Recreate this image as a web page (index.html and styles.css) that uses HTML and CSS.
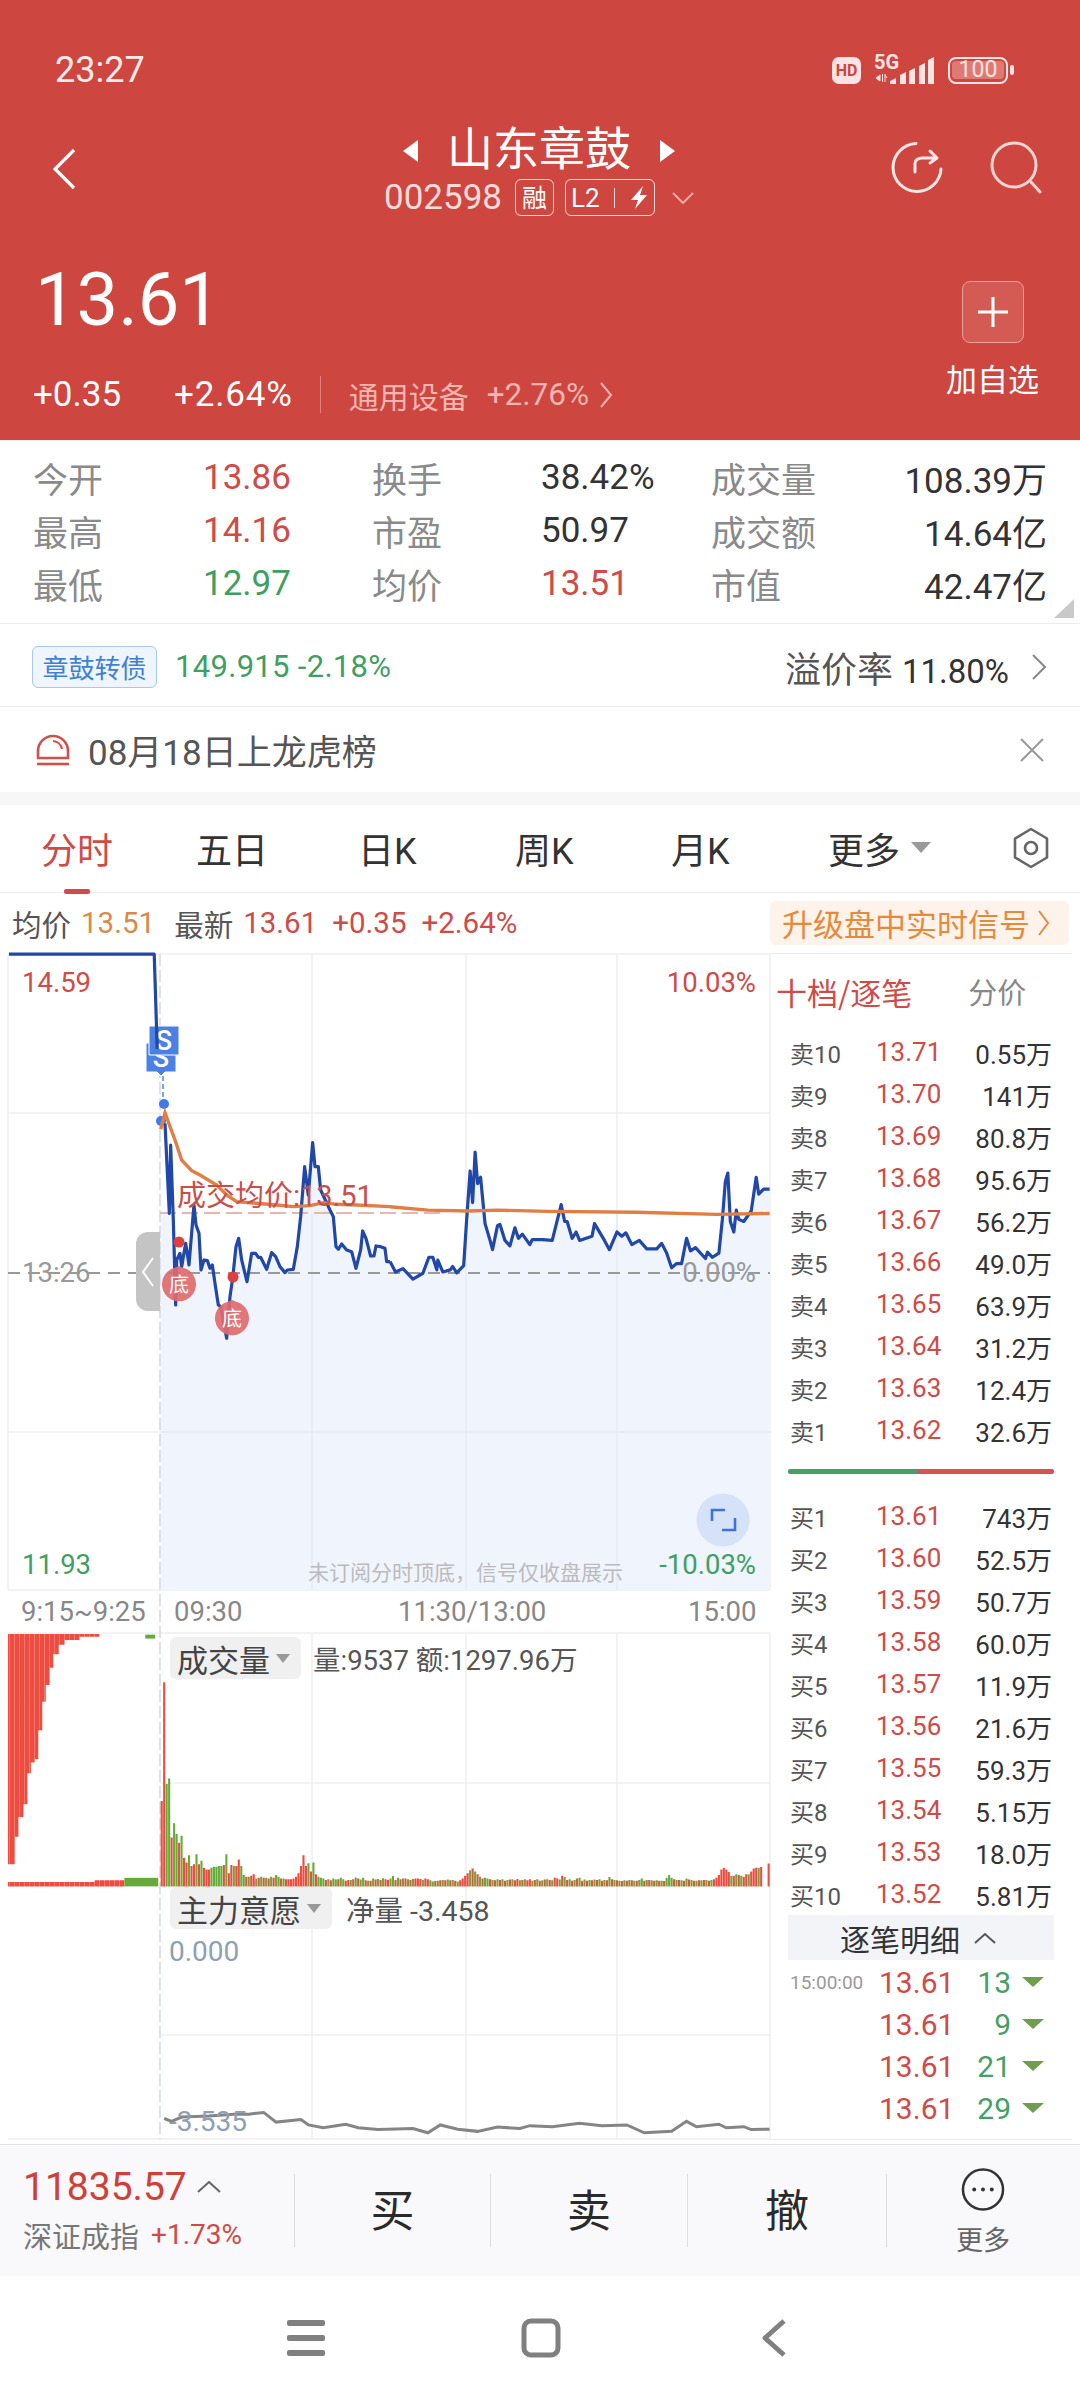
FILE: index.html
```html
<!DOCTYPE html>
<html lang="zh">
<head>
<meta charset="utf-8">
<title>山东章鼓</title>
<link rel="stylesheet" href="styles.css">
</head>
<body>
<div class="page">
<header class="hero">
  <div class="status">
    <span class="clock">23:27</span>
    <div class="status-icons">
      <span class="hd">HD</span>
      <svg class="signal" width="62" height="32" viewBox="0 0 62 32">
        <text x="0" y="15" class="five-g">5G</text>
        <path d="M2 24l4-3v6zM8.500 20v8M11 20v8M13 24l-2-3" fill="#fde3e1" stroke="#fde3e1" stroke-width="1"/>
        <g fill="#fde3e1"><path d="M16 30v-3l6-3v6z"/><path d="M26 30v-9l6-3v12z"/><path d="M35 30V17l6-3v16z"/><path d="M45 30V12l6-3v21z"/><path d="M54 30V6l6-3v27z"/></g>
      </svg>
      <div class="battery"><span class="battery-body"><span class="battery-fill">100</span></span><span class="battery-nub"></span></div>
    </div>
  </div>
  <div class="nav">
    <svg class="back" width="24" height="42" viewBox="0 0 24 42"><path d="M22 2 3 21l19 19" fill="none" stroke="#fff" stroke-width="3.200"/></svg>
    <div class="nav-center">
      <div class="title-row">
        <svg class="title-tri" width="17" height="24" viewBox="0 0 17 24"><path d="M16 1v22L1 12z" fill="#fff"/></svg>
        <h1 class="title">山东章鼓</h1>
        <svg class="title-tri" width="17" height="24" viewBox="0 0 17 24"><path d="M1 1v22l15-11z" fill="#fff"/></svg>
      </div>
      <div class="code-row">
        <span class="code">002598</span>
        <span class="tag-rong">融</span>
        <span class="tag-l2">L2<i class="tag-sep"></i><svg width="16" height="24" viewBox="0 0 16 24"><path d="M12 0 0 14h7l-3 9 12-14H9z" fill="#fff"/></svg></span>
        <svg class="code-chev" width="22" height="12" viewBox="0 0 22 12"><path d="M1 1l10 10L21 1" fill="none" stroke="#f4a9a4" stroke-width="2"/></svg>
      </div>
    </div>
    <div class="nav-icons">
      <svg width="52" height="52" viewBox="0 0 52 52"><path d="M25 2.500A24 24 0 1 0 50 28" fill="none" stroke="#fde6e4" stroke-width="3" stroke-linecap="round"/><path d="M24 31v-9c0-3 4-5 7-5h13M39 10l7 7-7 5" fill="none" stroke="#fde6e4" stroke-width="3" stroke-linecap="round" stroke-linejoin="round"/></svg>
      <svg width="52" height="54" viewBox="0 0 52 54"><circle cx="24" cy="24" r="22" fill="none" stroke="#fbd5d2" stroke-width="3"/><path d="M41 41l9 10" stroke="#fbd5d2" stroke-width="3" stroke-linecap="round"/></svg>
    </div>
  </div>
  <div class="quote">
    <div class="quote-main">
      <div class="price">13.61</div>
      <div class="changes">
        <span class="chg-a">+0.35</span><span class="chg-b">+2.64%</span>
        <span class="sector"><span class="sector-name">通用设备</span><span class="sector-pct">+2.76%</span><svg width="13" height="26" viewBox="0 0 13 26"><path d="M1 1l10 12L1 25" fill="none" stroke="#f2b5b0" stroke-width="2"/></svg></span>
      </div>
    </div>
    <div class="watch">
      <span class="watch-btn"><svg width="34" height="34" viewBox="0 0 34 34"><path d="M17 2v30M2 17h30" stroke="#fff" stroke-width="3"/></svg></span>
      <span class="watch-text">加自选</span>
    </div>
  </div>
</header>

<section class="stats">
  <span class="k">今开</span><span class="v up">13.86</span><span class="k">换手</span><span class="v">38.42%</span><span class="k">成交量</span><span class="v end">108.39万</span>
  <span class="k">最高</span><span class="v up">14.16</span><span class="k">市盈</span><span class="v">50.97</span><span class="k">成交额</span><span class="v end">14.64亿</span>
  <span class="k">最低</span><span class="v down">12.97</span><span class="k">均价</span><span class="v up">13.51</span><span class="k">市值</span><span class="v end">42.47亿</span>
  <i class="corner"></i>
</section>

<section class="bond">
  <span class="bond-tag">章鼓转债</span>
  <span class="bond-val">149.915 -2.18%</span>
  <span class="bond-prem">溢价率 <b>11.80%</b></span>
  <svg width="16" height="26" viewBox="0 0 16 26"><path d="M2 1l12 12L2 25" fill="none" stroke="#888" stroke-width="2"/></svg>
</section>

<section class="notice">
  <svg width="34" height="32" viewBox="0 0 34 32"><path d="M2 24V17a15 15 0 0 1 30 0v7z" fill="none" stroke="#d0504a" stroke-width="2.600"/><path d="M1 30h32" stroke="#d0504a" stroke-width="2.600"/><path d="M17 7a10 10 0 0 1 9 8" fill="none" stroke="#d0504a" stroke-width="2.200"/></svg>
  <span class="notice-text">08月18日上龙虎榜</span>
  <svg width="26" height="24" viewBox="0 0 26 24"><path d="M2 1l22 22M24 1 2 23" stroke="#999" stroke-width="2"/></svg>
</section>

<nav class="tabs">
  <span class="tab tab-on">分时</span>
  <span class="tab">五日</span>
  <span class="tab">日K</span>
  <span class="tab">周K</span>
  <span class="tab">月K</span>
  <span class="tab tab-more">更多<i class="tri-down"></i></span>
  <svg class="tab-gear" width="38" height="42" viewBox="0 0 38 42"><path d="M19 2l16 9.500v19L19 40 3 30.500v-19z" fill="none" stroke="#666" stroke-width="2.600" stroke-linejoin="round"/><circle cx="19" cy="21" r="6" fill="none" stroke="#666" stroke-width="2.600"/></svg>
</nav>

<section class="ticker">
  <span class="t-k">均价</span><span class="t-avg">13.51</span>
  <span class="t-k t-k2">最新</span><span class="t-v">13.61</span><span class="t-v t-gap">+0.35</span><span class="t-v t-gap">+2.64%</span>
  <span class="promo">升级盘中实时信号<svg width="12" height="26" viewBox="0 0 12 26"><path d="M1 1l9 12-9 12" fill="none" stroke="#e58a3c" stroke-width="2"/></svg></span>
</section>

<section class="board">
  <div class="canvas">
    <svg class="plot" width="780" height="1190" viewBox="0 953 780 1190">
      <defs>
        <pattern id="stripe" patternUnits="userSpaceOnUse" width="10.050" height="20">
          <rect width="10.050" height="20" fill="#ee4c40"/>
          <rect x="8.800" width="1.250" height="20" fill="#f7958c"/>
        </pattern>
      </defs>
      <!-- grid -->
      <path class="grid" d="M8 954H770M8 1113H770M8 1432H770M8 1590H770M8 954V1590M770 954V1590M312 954V1590M466 954V1590M617 954V1590M8 1633H770M160 1783H770M160 2035H770M8 2139H770M312 1633V2139M466 1633V2139M617 1633V2139M770 1633V2139"/>
      <!-- area -->
      <g transform="translate(130 1020) scale(.3333)">
        <polygon class="area" points="90,1710 90,578 118,578 122,578 130,600 137,855 140,720 150,700 155,740 167,670 177,735 192,555 198,615 207,640 213,750 222,720 232,722 240,745 247,735 255,790 265,855 272,860 290,955 300,830 308,775 318,680 326,655 335,720 351,785 365,700 377,700 385,712 392,712 410,748 425,698 437,710 450,740 465,758 472,750 490,748 502,680 512,590 524,440 535,525 548,368 555,440 565,440 572,510 600,570 610,590 618,680 625,688 635,672 650,690 665,695 678,745 692,690 698,633 708,655 722,708 732,708 738,678 752,680 765,685 770,725 780,725 780,1710"/>
      </g>
      <g transform="translate(0 950) scale(.4975 .4209)">
        <polygon class="area" points="784,1520 784,740 795,765 810,757 830,782 850,768 862,730 870,730 878,760 880,737 890,765 905,760 910,752 918,767 932,750 938,640 945,525 950,600 955,480 960,555 966,540 975,650 985,690 990,712 1000,655 1005,652 1015,690 1025,703 1035,660 1042,685 1050,675 1065,700 1070,688 1090,688 1110,690 1128,605 1135,645 1140,645 1150,685 1158,670 1165,690 1190,680 1195,650 1215,690 1225,712 1240,670 1250,680 1258,672 1270,700 1285,690 1300,710 1320,710 1330,697 1340,720 1350,755 1360,745 1370,745 1380,685 1388,715 1398,707 1418,733 1422,718 1432,730 1445,720 1452,640 1458,550 1463,530 1468,645 1475,670 1480,618 1485,640 1495,645 1510,620 1520,540 1525,580 1535,568 1547,568 1547,1520"/>
      </g>
      <path class="grid-soft" d="M312 1213V1590M466 1213V1590M617 1213V1590M160 1432H770"/>
      <path class="vdash" d="M160 954V2139"/>
      <path class="mid-dash" d="M8 1273H770"/>
      <path class="avg-dash" d="M160 1213H445"/>
      <!-- flags -->
      <path class="flag" d="M146 1043h30v29h-11l-4 4-4-4h-11z"/>
      <text class="flag-s" x="161" y="1067" text-anchor="middle">S</text>
      <path class="flag" d="M149 1026h30v29h-30z"/>
      <text class="flag-s" x="164" y="1050" text-anchor="middle">S</text>
      <path class="flag-dash" d="M163 1076V1104"/>
      <circle class="dot-blue" cx="161" cy="1121" r="5"/>
      <circle class="dot-blue" cx="164" cy="1104" r="5"/>
      <!-- price -->
      <g transform="translate(0 950) scale(.4975 .4209)">
        <polyline class="price-line" points="18,10 310,10 316,235"/>
      </g>
      <g transform="translate(130 1020) scale(.3333)">
        <polyline class="price-line" points="105,310 118,580 122,375 130,600 137,855 140,720 150,700 155,740 167,670 177,735 192,555 198,615 207,640 213,750 222,720 232,722 240,745 247,735 255,790 265,855 272,860 290,955 300,830 308,775 318,680 326,655 335,720 351,785 365,700 377,700 385,712 392,712 410,748 425,698 437,710 450,740 465,758 472,750 490,748 502,680 512,590 524,440 535,525 548,368 555,440 565,440 572,510 600,570 610,590 618,680 625,688 635,672 650,690 665,695 678,745 692,690 698,633 708,655 722,708 732,708 738,678 752,680 765,685 770,725 780,725"/>
      </g>
      <g transform="translate(0 950) scale(.4975 .4209)">
        <polyline class="price-line" points="784,740 795,765 810,757 830,782 850,768 862,730 870,730 878,760 880,737 890,765 905,760 910,752 918,767 932,750 938,640 945,525 950,600 955,480 960,555 966,540 975,650 985,690 990,712 1000,655 1005,652 1015,690 1025,703 1035,660 1042,685 1050,675 1065,700 1070,688 1090,688 1110,690 1128,605 1135,645 1140,645 1150,685 1158,670 1165,690 1190,680 1195,650 1215,690 1225,712 1240,670 1250,680 1258,672 1270,700 1285,690 1300,710 1320,710 1330,697 1340,720 1350,755 1360,745 1370,745 1380,685 1388,715 1398,707 1418,733 1422,718 1432,730 1445,720 1452,640 1458,550 1463,530 1468,645 1475,670 1480,618 1485,640 1495,645 1510,620 1520,540 1525,580 1535,568 1547,568"/>
      </g>
      <!-- average -->
      <g transform="translate(130 1020) scale(.3333)">
        <polyline class="avg-line" points="92,328 105,278 120,320 135,360 155,420 185,452 210,465 260,495 290,525 320,545 380,550 440,555 490,560 540,557 580,548 620,553 680,555 780,560"/>
      </g>
      <g transform="translate(0 950) scale(.4975 .4209)">
        <polyline class="avg-line" points="784,610 860,618 940,620 1000,618 1100,621 1280,623 1440,628 1547,626"/>
      </g>
      <!-- bottom markers -->
      <path class="di" d="M179 1266l5 2a17 17 0 1 1-10 0z"/>
      <path class="di" d="M232 1300l5 2a17 17 0 1 1-10 0z"/>
      <circle class="dot-red" cx="179" cy="1242" r="5.500"/>
      <circle class="dot-red" cx="233" cy="1277" r="5.500"/>
      <!-- expand -->
      <ellipse class="expand" cx="723" cy="1520" rx="26.500" ry="26.500"/>
      <path class="expand-mark" d="M712 1521v-11h13M735 1518v12h-13"/>
      <!-- pre-market volume -->
      <g transform="translate(0 1600) scale(.4975 .3571)">
        <path fill="url(#stripe)" d="M16 95H200V103H160V112H130V125H118V152H107V190H100V238H92V285H85V365H77V445H70V455H62V485H55V572H47V608H37V663H30V740H16Z"/>
        <rect class="bar-green-f" x="292" y="97" width="20" height="11"/>
        <path fill="url(#stripe)" d="M16 790H190V785H250V802H16Z"/>
        <rect class="bar-green-f" x="250" y="778" width="68" height="24"/>
        <path class="bar-r" d="M325 802V563M330 802V230M345 802V665M360 802V680M370 802V722M375 802V735M385 802V745M390 802V740M400 802V740M410 802V750M415 802V755M420 802V755M450 802V742M460 802V765M465 802V742M475 802V745M480 802V727M495 802V775M505 802V772M510 802V768M520 802V778M530 802V778M540 802V780M550 802V778M565 802V780M575 802V782M580 802V782M585 802V782M590 802V780M595 802V775M600 802V765M605 802V745M610 802V715M615 802V745M625 802V760M635 802V768M655 802V784M665 802V785M680 802V782M695 802V786M700 802V784M710 802V782M720 802V780M735 802V785M745 802V786M755 802V783M765 802V784M775 802V782M780 802V784M795 802V784M805 802V782M815 802V780M825 802V784M835 802V780M840 802V780M845 802V781M855 802V780M860 802V782M875 802V787M885 802V785M895 802V785M905 802V785M915 802V786M925 802V785M930 802V780M935 802V772M940 802V765M950 802V752M960 802V768M970 802V780M985 802V782M995 802V785M1005 802V784M1015 802V786M1025 802V783M1035 802V785M1040 802V781M1050 802V784M1060 802V785M1065 802V782M1075 802V784M1085 802V786M1095 802V783M1105 802V784M1115 802V778M1120 802V780M1130 802V772M1140 802V784M1150 802V786M1160 802V780M1170 802V786M1180 802V786M1190 802V785M1200 802V784M1210 802V786M1220 802V785M1230 802V782M1240 802V785M1250 802V787M1260 802V786M1270 802V785M1280 802V786M1295 802V786M1305 802V784M1315 802V786M1325 802V786M1335 802V787M1355 802V782M1365 802V784M1375 802V786M1385 802V783M1395 802V786M1405 802V785M1415 802V784M1425 802V786M1435 802V782M1440 802V778M1445 802V770M1450 802V755M1455 802V750M1460 802V755M1465 802V762M1475 802V772M1485 802V770M1495 802V775M1500 802V768M1510 802V760M1515 802V752M1520 802V750M1530 802V748M1545 802V738"/>
        <path class="bar-g" d="M335 802V515M340 802V500M350 802V625M355 802V655M365 802V660M380 802V715M395 802V712M405 802V730M425 802V750M430 802V747M435 802V747M440 802V745M445 802V745M455 802V712M470 802V745M485 802V745M490 802V770M500 802V775M515 802V780M525 802V775M535 802V778M545 802V775M555 802V770M560 802V775M570 802V780M620 802V737M630 802V735M640 802V775M645 802V778M650 802V780M660 802V782M670 802V780M675 802V783M685 802V778M690 802V782M705 802V784M715 802V777M725 802V783M730 802V778M740 802V786M750 802V780M760 802V781M770 802V779M785 802V780M790 802V773M800 802V778M810 802V780M820 802V782M830 802V781M850 802V784M865 802V785M870 802V788M880 802V786M890 802V784M900 802V783M910 802V784M920 802V788M945 802V757M955 802V760M965 802V775M975 802V778M980 802V780M990 802V784M1000 802V782M1010 802V782M1020 802V784M1030 802V782M1045 802V785M1055 802V782M1070 802V786M1080 802V782M1090 802V785M1100 802V782M1110 802V785M1125 802V783M1135 802V776M1145 802V782M1155 802V784M1165 802V778M1175 802V783M1185 802V784M1195 802V783M1205 802V782M1215 802V784M1225 802V776M1235 802V784M1245 802V786M1255 802V785M1265 802V784M1275 802V786M1285 802V784M1290 802V780M1300 802V784M1310 802V785M1320 802V785M1330 802V786M1340 802V778M1345 802V770M1350 802V778M1360 802V784M1370 802V785M1380 802V780M1390 802V784M1400 802V786M1410 802V785M1420 802V784M1430 802V784M1470 802V772M1480 802V768M1490 802V772M1505 802V768M1525 802V750"/>
        <polyline class="will-line" points="330,1452 345,1460 365,1448 420,1445 470,1440 500,1440 530,1435 555,1462 605,1455 620,1470 650,1478 695,1468 720,1478 760,1483 830,1480 860,1492 885,1470 920,1482 960,1488 1000,1476 1045,1480 1065,1472 1110,1475 1165,1465 1210,1472 1260,1470 1295,1492 1350,1488 1380,1460 1400,1475 1445,1468 1460,1478 1495,1475 1510,1483 1547,1482"/>
      </g>
    </svg>

    <span class="lab lab-hi-l up">14.59</span>
    <span class="lab lab-hi-r up">10.03%</span>
    <span class="lab lab-mid-l gray">13:26</span>
    <span class="lab lab-mid-r gray">0.00%</span>
    <span class="lab lab-lo-l down">11.93</span>
    <span class="lab lab-lo-r down">-10.03%</span>
    <span class="hint">未订阅分时顶底，信号仅收盘展示</span>
    <span class="avg-label">成交均价:13.51</span>
    <span class="di-t di-a">底</span>
    <span class="di-t di-b">底</span>
    <span class="handle"><svg width="14" height="30" viewBox="0 0 14 30"><path d="M12 1 2 15l10 14" fill="none" stroke="#fff" stroke-width="2"/></svg></span>

    <span class="axis ax-a">9:15~9:25</span>
    <span class="axis ax-b">09:30</span>
    <span class="axis ax-c">11:30/13:00</span>
    <span class="axis ax-d">15:00</span>

    <div class="chip-row chip-vol"><span class="chip">成交量<i class="tri-down tri-sm"></i></span><span class="chip-val">量:9537 额:1297.96万</span></div>
    <div class="chip-row chip-will"><span class="chip">主力意愿<i class="tri-down tri-sm"></i></span><span class="chip-val chip-val-b">净量 -3.458</span></div>
    <span class="will will-top">0.000</span>
    <span class="will will-low">-3.535</span>
  </div>

  <aside class="book">
    <div class="book-head"><span class="book-on">十档/逐笔</span><span class="book-off">分价</span></div>
    <div class="levels">
      <div class="lv"><span class="lv-k">卖10</span><span class="lv-p">13.71</span><span class="lv-q">0.55万</span></div>
      <div class="lv"><span class="lv-k">卖9</span><span class="lv-p">13.70</span><span class="lv-q">141万</span></div>
      <div class="lv"><span class="lv-k">卖8</span><span class="lv-p">13.69</span><span class="lv-q">80.8万</span></div>
      <div class="lv"><span class="lv-k">卖7</span><span class="lv-p">13.68</span><span class="lv-q">95.6万</span></div>
      <div class="lv"><span class="lv-k">卖6</span><span class="lv-p">13.67</span><span class="lv-q">56.2万</span></div>
      <div class="lv"><span class="lv-k">卖5</span><span class="lv-p">13.66</span><span class="lv-q">49.0万</span></div>
      <div class="lv"><span class="lv-k">卖4</span><span class="lv-p">13.65</span><span class="lv-q">63.9万</span></div>
      <div class="lv"><span class="lv-k">卖3</span><span class="lv-p">13.64</span><span class="lv-q">31.2万</span></div>
      <div class="lv"><span class="lv-k">卖2</span><span class="lv-p">13.63</span><span class="lv-q">12.4万</span></div>
      <div class="lv"><span class="lv-k">卖1</span><span class="lv-p">13.62</span><span class="lv-q">32.6万</span></div>
    </div>
    <div class="split"><i class="split-g"></i><i class="split-r"></i></div>
    <div class="levels">
      <div class="lv"><span class="lv-k">买1</span><span class="lv-p">13.61</span><span class="lv-q">743万</span></div>
      <div class="lv"><span class="lv-k">买2</span><span class="lv-p">13.60</span><span class="lv-q">52.5万</span></div>
      <div class="lv"><span class="lv-k">买3</span><span class="lv-p">13.59</span><span class="lv-q">50.7万</span></div>
      <div class="lv"><span class="lv-k">买4</span><span class="lv-p">13.58</span><span class="lv-q">60.0万</span></div>
      <div class="lv"><span class="lv-k">买5</span><span class="lv-p">13.57</span><span class="lv-q">11.9万</span></div>
      <div class="lv"><span class="lv-k">买6</span><span class="lv-p">13.56</span><span class="lv-q">21.6万</span></div>
      <div class="lv"><span class="lv-k">买7</span><span class="lv-p">13.55</span><span class="lv-q">59.3万</span></div>
      <div class="lv"><span class="lv-k">买8</span><span class="lv-p">13.54</span><span class="lv-q">5.15万</span></div>
      <div class="lv"><span class="lv-k">买9</span><span class="lv-p">13.53</span><span class="lv-q">18.0万</span></div>
      <div class="lv"><span class="lv-k">买10</span><span class="lv-p">13.52</span><span class="lv-q">5.81万</span></div>
    </div>
    <div class="detail-bar">逐笔明细<svg width="22" height="12" viewBox="0 0 22 12"><path d="M1 11 11 2l10 9" fill="none" stroke="#555" stroke-width="2"/></svg></div>
    <div class="trades">
      <div class="tr"><span class="tr-t">15:00:00</span><span class="tr-p">13.61</span><span class="tr-q">13</span><i class="tri-g"></i></div>
      <div class="tr"><span class="tr-t"></span><span class="tr-p">13.61</span><span class="tr-q">9</span><i class="tri-g"></i></div>
      <div class="tr"><span class="tr-t"></span><span class="tr-p">13.61</span><span class="tr-q">21</span><i class="tri-g"></i></div>
      <div class="tr"><span class="tr-t"></span><span class="tr-p">13.61</span><span class="tr-q">29</span><i class="tri-g"></i></div>
      <div class="tr"><span class="tr-t"></span><span class="tr-p">13.61</span><span class="tr-q">17</span><i class="tri-g"></i></div>
    </div>
  </aside>
</section>

<footer class="dock">
  <div class="index">
    <div class="index-top"><span class="index-val">11835.57</span><svg width="24" height="12" viewBox="0 0 24 12"><path d="M1 11 12 1l11 10" fill="none" stroke="#666" stroke-width="2"/></svg></div>
    <div class="index-sub"><span class="index-name">深证成指</span><span class="index-pct">+1.73%</span></div>
  </div>
  <span class="act">买</span>
  <span class="act">卖</span>
  <span class="act">撤</span>
  <div class="act act-more">
    <svg width="44" height="44" viewBox="0 0 44 44"><circle cx="22" cy="22" r="20.500" fill="none" stroke="#333" stroke-width="2.600"/><g fill="#333"><circle cx="13" cy="22" r="2"/><circle cx="22" cy="22" r="2"/><circle cx="31" cy="22" r="2"/></g></svg>
    <span class="act-more-t">更多</span>
  </div>
</footer>

<div class="sysnav">
  <svg width="38" height="36" viewBox="0 0 38 36"><g fill="#808080"><rect width="38" height="6" rx="2"/><rect y="15" width="38" height="6" rx="2"/><rect y="30" width="38" height="6" rx="2"/></g></svg>
  <svg width="40" height="40" viewBox="0 0 40 40"><rect x="3" y="3" width="34" height="34" rx="7" fill="none" stroke="#808080" stroke-width="5"/></svg>
  <svg width="26" height="38" viewBox="0 0 26 38"><path d="M23 2 4 19l19 17" fill="none" stroke="#808080" stroke-width="5" stroke-linejoin="round"/></svg>
</div>
</div>
</body>
</html>
```

FILE: styles.css
```css
* { box-sizing: border-box; }
html, body { margin: 0; padding: 0; background: #fff; }
body { font-family: Roboto, "Noto Sans CJK SC", sans-serif; color: #333; }
i { font-style: normal; display: block; }
.page { width: 1080px; height: 2400px; overflow: hidden; position: relative; }
.up { color: #cf4b47; }
.down { color: #3f9f63; }
.gray { color: #999; }

/* hero */
.hero { height: 440px; background: #cd463f; color: #fff; padding-top: 46px; display: flex; flex-direction: column; }
.status { height: 48px; padding: 0 66px 0 55px; display: flex; align-items: center; justify-content: space-between; }
.clock { font-size: 36px; line-height: 48px; color: #fdeceb; }
.status-icons { display: flex; align-items: center; }
.hd { width: 29px; height: 27px; border-radius: 7px; background: #fde3e1; color: #cd463f; font-size: 16px; font-weight: 700; line-height: 27px; text-align: center; margin-right: 13px; }
.signal { margin-right: 12px; overflow: visible; }
.five-g { font: 700 20px Roboto, sans-serif; fill: #fde3e1; }
.battery { display: flex; align-items: center; }
.battery-body { width: 60px; height: 27px; border: 2.500px solid #fde3e1; border-radius: 8px; padding: 2px; display: block; }
.battery-fill { display: block; height: 18px; border-radius: 4px; background: #de7a74; font-size: 23px; line-height: 18px; text-align: center; color: #fde3e1; }
.battery-nub { width: 4px; height: 10px; background: #fde3e1; border-radius: 2px; margin-left: 2px; }

.nav { margin-top: 29px; height: 93px; padding: 0 38px 0 36px; display: grid; grid-template-columns: 1fr auto 1fr; }
.back { margin: 25px 0 0 16px; }
.nav-center { display: flex; flex-direction: column; align-items: center; }
.title-row { display: flex; align-items: center; gap: 28px; height: 50px; }
.title-tri { margin-top: 6px; }
.title { margin: -3px 0 0; align-self: flex-start; font-size: 46px; line-height: 50px; font-weight: 400; font-family: "Noto Sans CJK SC", sans-serif; }
.code-row { display: flex; align-items: center; margin-top: 6px; height: 37px; }
.code { font-size: 35px; color: #fbdcd9; line-height: 37px; }
.tag-rong { width: 39px; height: 37px; border: 1.500px solid #fbdcd9; border-radius: 6px; margin-left: 13px; font-family: "Noto Sans CJK SC", sans-serif; font-size: 25px; line-height: 33px; text-align: center; }
.tag-l2 { width: 90px; height: 37px; border: 1.500px solid #fbdcd9; border-radius: 6px; margin-left: 11px; display: flex; align-items: center; padding-left: 5px; font-size: 26px; }
.tag-sep { width: 1px; height: 20px; background: #fbdcd9; margin: 0 16px 0 14px; }
.code-chev { margin-left: 17px; }
.nav-icons { display: flex; justify-content: flex-end; gap: 47px; padding-top: 18px; }

.quote { margin-top: 54px; padding: 0 41px 0 33px; display: flex; justify-content: space-between; }
.quote-main { display: flex; flex-direction: column; }
.price { font-size: 74px; line-height: 60px; padding-left: 2px; }
.changes { margin-top: 46px; height: 37px; display: flex; align-items: center; font-size: 35px; }
.chg-b { margin-left: 53px; letter-spacing: .8px; }
.sector { margin-left: 27px; padding-left: 28px; border-left: 1px solid #e0837e; display: flex; align-items: center; height: 37px; color: #f2b5b0; font-size: 31.500px; letter-spacing: 0; }
.sector-name { font-family: "Noto Sans CJK SC", sans-serif; font-size: 30px; }
.sector-pct { margin: 0 11px 0 18px; }
.watch { display: flex; flex-direction: column; align-items: center; margin-top: 11px; }
.watch-btn { width: 62px; height: 62px; border: 1.500px solid #eb9f9a; border-radius: 8px; background: #d45a54; display: flex; align-items: center; justify-content: center; }
.watch-text { margin-top: 17px; font-size: 31px; line-height: 36px; font-family: "Noto Sans CJK SC", sans-serif; }

/* stats */
.stats { position: relative; height: 184px; padding: 10px 0 0 33px; display: grid; grid-template-columns: 170px 169px 169px 170px 110px 226px; grid-auto-rows: 53px; align-items: center; font-size: 35px; width: 1080px; border-top: 1px solid #fdf0ef; border-bottom: 1px solid #ececec; }
.stats .k { font-size: 35px; color: #8a8a8a; }
.stats .v.end { text-align: right; grid-column: 6; width: 226px; }
.stats .v { color: #333; }
.stats .v.up { color: #cf4b47; }
.stats .v.down { color: #3f9f63; }
.corner { position: absolute; right: 6px; bottom: 5px; width: 0; height: 0; border-left: 20px solid transparent; border-bottom: 19px solid #c9c9c9; }

.bond { height: 83px; padding: 3px 33px 0 32px; display: flex; align-items: center; border-bottom: 1px solid #ececec; }
.bond-tag { width: 125px; height: 42px; border: 1px solid #a9c8ef; border-radius: 6px; background: #eef5fd; color: #3f7fd6; font-family: "Noto Sans CJK SC", sans-serif; font-size: 26px; line-height: 40px; text-align: center; }
.bond-val { margin-left: 18px; color: #3f9f63; font-size: 31px; letter-spacing: .3px; flex: 1; }
.bond-prem { font-size: 36px; color: #555; margin-right: 22px; }
.bond-prem b { font-weight: 400; font-size: 33px; color: #333; }

.notice { height: 85px; padding: 0 35px 0 36px; display: flex; align-items: center; }
.notice-text { margin-left: 18px; font-size: 35px; color: #555; flex: 1; }

.tabs { height: 101px; border-top: 13px solid #f7f7f7; border-bottom: 1px solid #ececec; position: relative; font-size: 36px; display: grid; grid-template-columns: 155px 162px 157px 156px 157px 184px 1fr; align-items: center; padding: 0 0 2px 41px; }
.tab { color: #333; }
.tab-on { color: #cf4b47; position: relative; }
.tab-on::after { content: ""; position: absolute; left: 23px; bottom: -20px; width: 26px; height: 5px; border-radius: 2px; background: #cf4b47; }
.tab-more { display: flex; align-items: center; gap: 11px; }
.tri-down { width: 0; height: 0; border-left: 10px solid transparent; border-right: 10px solid transparent; border-top: 11px solid #999; }
.tab-gear { justify-self: start; }

.ticker { height: 60px; padding: 0 11px 0 12px; display: flex; align-items: center; font-size: 29.500px; }
.t-k { color: #555; }
.t-avg { color: #d98a4a; margin-left: 10px; }
.t-k2 { margin-left: 19px; }
.t-v { color: #cf4b47; margin-left: 10px; }
.t-gap { margin-left: 15px; }
.promo { margin-left: auto; width: 299px; height: 44px; border-radius: 6px; background: #fdf3ea; color: #e58a3c; font-family: "Noto Sans CJK SC", sans-serif; font-size: 31px; line-height: 44px; display: flex; align-items: center; padding-left: 12px; gap: 8px; }

/* board */
.board { height: 1191px; display: grid; grid-template-columns: 770px 310px; }
.canvas { position: relative; }
.plot { position: absolute; left: 0; top: 0; overflow: visible; }
.grid { fill: none; stroke: #efefef; stroke-width: 1.500; }
.grid-soft { fill: none; stroke: #e6eaf3; stroke-width: 1.500; }
.area { fill: #eff4fd; }
.vdash { stroke: #dfe1e8; stroke-width: 2; stroke-dasharray: 12 4; fill: none; }
.mid-dash { stroke: #999; stroke-width: 2; stroke-dasharray: 12 8; fill: none; }
.avg-dash { stroke: #eab4b1; stroke-width: 2; stroke-dasharray: 16 6; fill: none; }
.flag { fill: #4c80e4; stroke: #fff; stroke-width: 1; }
.flag-s { font: 500 27px Roboto, sans-serif; fill: #fff; }
.flag-dash { stroke: #7aa3ea; stroke-width: 2; stroke-dasharray: 5 3; }
.dot-blue { fill: #3f7be6; }
.dot-red { fill: #de3f3f; }
.di { fill: #df6a6e; opacity: .92; }
.price-line { fill: none; stroke: #2148a8; stroke-width: 3.200; vector-effect: non-scaling-stroke; stroke-linejoin: round; }
.avg-line { fill: none; stroke: #e07f45; stroke-width: 3.400; vector-effect: non-scaling-stroke; }
.expand { fill: #d6e2f8; }
.expand-mark { fill: none; stroke: #3f73dc; stroke-width: 2.600; }
.bar-green-f { fill: #66ab3a; }
.bar-r { fill: none; stroke: #ee4c40; stroke-width: 2.100; vector-effect: non-scaling-stroke; }
.bar-g { fill: none; stroke: #66ab3a; stroke-width: 2.100; vector-effect: non-scaling-stroke; }
.will-line { fill: none; stroke: #858585; stroke-width: 3; vector-effect: non-scaling-stroke; }

.lab { position: absolute; font-size: 27.500px; line-height: 32px; }
.lab-hi-l { left: 22px; top: 14px; }
.lab-hi-r { right: 14px; top: 14px; }
.lab-mid-l { left: 22px; top: 304px; }
.lab-mid-r { right: 14px; top: 304px; }
.lab-lo-l { left: 22px; top: 596px; }
.lab-lo-r { right: 14px; top: 596px; }
.hint { position: absolute; left: 308px; top: 604px; font-family: "Noto Sans CJK SC", sans-serif; font-size: 21px; line-height: 28px; color: #bbb; white-space: nowrap; }
.avg-label { position: absolute; left: 177px; top: 224px; font-size: 29px; line-height: 38px; color: #c84e4a; }
.di-t { position: absolute; width: 34px; text-align: center; font-family: "Noto Sans CJK SC", sans-serif; font-size: 20px; line-height: 26px; color: #fff; }
.di-a { left: 162px; top: 318px; }
.di-b { left: 215px; top: 352px; }
.handle { position: absolute; left: 136px; top: 279px; width: 24px; height: 79px; border-radius: 12px 0 0 12px; background: #c4c4c4; display: flex; align-items: center; justify-content: center; }

.axis { position: absolute; top: 643px; font-size: 27.500px; line-height: 32px; color: #888; white-space: nowrap; }
.ax-a { left: 21px; }
.ax-b { left: 174px; }
.ax-c { left: 398px; }
.ax-d { left: 688px; }

.chip-row { position: absolute; left: 170px; display: flex; align-items: center; }
.chip-vol { top: 684px; }
.chip-will { top: 934px; }
.chip { height: 42px; padding: 0 11px 0 7px; background: #f0f0f0; border-radius: 6px; display: flex; align-items: center; gap: 6px; font-family: "Noto Sans CJK SC", sans-serif; font-size: 31px; color: #444; }
.tri-sm { border-left-width: 7px; border-right-width: 7px; border-top-width: 9px; }
.chip-val { margin-left: 12px; font-size: 27.500px; color: #555; white-space: nowrap; }
.chip-val-b { margin-left: 14px; font-size: 28.500px; }
.will { position: absolute; left: 169px; font-size: 28px; line-height: 32px; color: #8ea0b3; }
.will-top { top: 983px; }
.will-low { top: 1153px; }

/* order book */
.book { border-top: 1.500px solid #ececec; border-bottom: 1.500px solid #ececec; height: 1187px; padding: 16px 20px 0 20px; overflow: hidden; width: 302px; }
.book-head { height: 42px; display: flex; align-items: center; margin-left: -14px; }
.book-on { font-size: 31px; color: #cf4b47; font-family: "Noto Sans CJK SC", sans-serif; }
.book-off { margin-left: 56px; font-size: 29px; color: #888; font-family: "Noto Sans CJK SC", sans-serif; }
.levels { display: flex; flex-direction: column; }
.book-head + .levels { margin-top: 19px; }
.lv { height: 42px; display: grid; grid-template-columns: 86px 1fr auto; align-items: center; font-size: 26px; white-space: nowrap; }
.lv-k { font-size: 24px; color: #555; }
.lv-p { color: #cf4b47; }
.lv-q { color: #333; }
.split { margin: 18px -2px 21px -2px; height: 5px; display: flex; border-radius: 2px; overflow: hidden; }
.split-g { width: 130px; background: #45a063; }
.split-r { flex: 1; background: #d8524e; }
.detail-bar { margin: 0 -2px; height: 45px; background: #f3f4f8; font-family: "Noto Sans CJK SC", sans-serif; font-size: 30px; color: #333; display: flex; align-items: center; padding-left: 52px; gap: 14px; }
.trades { margin-top: 1px; }
.tr { height: 42px; display: grid; grid-template-columns: 89px 72px 60px auto; align-items: center; white-space: nowrap; }
.tr-t { font-size: 19px; color: #999; }
.tr-p { font-size: 30px; color: #cf4b47; }
.tr-q { font-size: 30px; color: #45a063; text-align: right; }
.tri-g { width: 0; height: 0; margin-left: 11px; border-left: 11px solid transparent; border-right: 11px solid transparent; border-top: 10px solid #6f9f4e; }

/* dock */
.dock { height: 132px; background: #f9f9fb; border-top: 1.500px solid #e2e2e2; display: grid; grid-template-columns: 294px 196px 197px 199px 1fr; align-items: center; }
.index { padding-left: 23px; margin-top: -4px; }
.index-top { display: flex; align-items: center; gap: 10px; }
.index-val { font-size: 39px; line-height: 44px; color: #cf4038; }
.index-sub { margin-top: 8px; display: flex; align-items: center; gap: 12px; }
.index-name { font-family: "Noto Sans CJK SC", sans-serif; font-size: 29px; line-height: 36px; color: #777; }
.index-pct { font-size: 28px; color: #cf4b47; }
.act { height: 73px; padding-bottom: 6px; border-left: 1.500px solid #ddd; display: flex; align-items: center; justify-content: center; font-family: "Noto Sans CJK SC", sans-serif; font-size: 44px; color: #2a2a2a; }
.act-more { flex-direction: column; gap: 14px; height: 85px; padding-bottom: 0; border: none; position: relative; }
.act-more::before { content: ""; position: absolute; left: 0; top: 6px; height: 73px; border-left: 1.500px solid #ddd; }
.act-more-t { font-size: 27px; line-height: 28px; color: #666; }

.sysnav { height: 124px; display: grid; grid-template-columns: 234px 240px 1fr; align-items: center; padding-left: 287px; }
.sysnav svg { justify-self: start; }
```
